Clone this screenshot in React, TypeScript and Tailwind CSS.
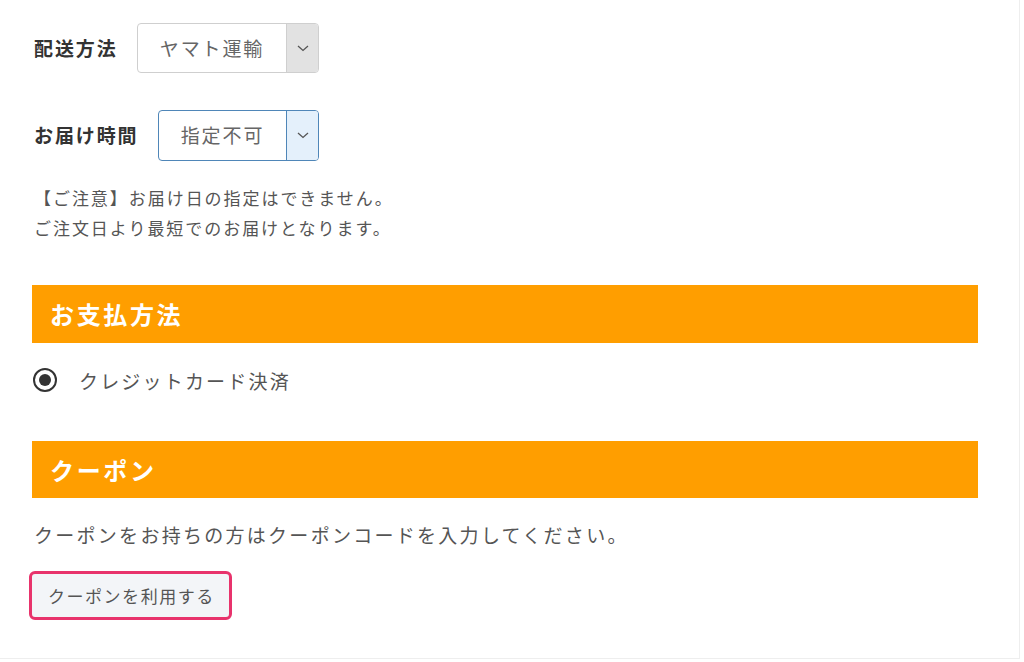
import React from 'react';

const font = { fontFamily: '"Noto Sans CJK JP", "Noto Sans", sans-serif' };

const Chevron = () => (
  <svg width="12" height="7" viewBox="0 0 12 7" fill="none">
    <path d="M1 1l5 4.5L11 1" stroke="#555" strokeWidth="1.3" />
  </svg>
);

const SelectBox = ({ value, active }: { value: string; active?: boolean }) => (
  <div
    className={
      'flex h-full rounded-[4px] border bg-white ' +
      (active ? 'border-[#4f86b8] w-[161px]' : 'border-[#cfcfcf] w-[182px]')
    }
  >
    <div className="flex flex-1 items-center justify-center text-[19px] tracking-[0.1em] text-[#666]">
      {value}
    </div>
    <div
      className={
        'flex w-[32px] items-center justify-center rounded-r-[3px] border-l ' +
        (active ? 'border-[#4f86b8] bg-[#e4f0fb]' : 'border-[#cfcfcf] bg-[#e2e2e2]')
      }
    >
      <Chevron />
    </div>
  </div>
);

const Heading = ({ children }: { children: React.ReactNode }) => (
  <div className="flex w-[946px] items-center bg-[#ff9e00] pl-[18px] text-[24px] font-bold tracking-[0.11em] text-white">
    {children}
  </div>
);

export default function App() {
  return (
    <div style={font} className="h-[659px] w-[1020px] border-r border-b border-[#eeeeee] bg-white pl-[32px] pt-[23px]">
      <div className="ml-[2px] flex h-[50px] items-center">
        <div className="w-[103px] text-[19px] font-bold tracking-[0.1em] text-[#333]">配送方法</div>
        <SelectBox value="ヤマト運輸" />
      </div>

      <div className="ml-[2px] mt-[37px] flex h-[51px] items-center">
        <div className="w-[124px] text-[19px] font-bold tracking-[0.1em] text-[#333]">お届け時間</div>
        <SelectBox value="指定不可" active />
      </div>

      <div className="ml-[2px] mt-[22px] text-[17px] leading-[30px] tracking-[0.115em] text-[#555]">
        <p>【ご注意】お届け日の指定はできません。</p>
        <p>ご注文日より最短でのお届けとなります。</p>
      </div>

      <div className="mt-[42px] flex h-[58px]">
        <Heading>お支払方法</Heading>
      </div>

      <div className="ml-[1px] mt-[25px] flex h-[24px] items-center">
        <div className="flex h-[24px] w-[24px] items-center justify-center rounded-full border-2 border-[#333]">
          <div className="h-[12px] w-[12px] rounded-full bg-[#333]" />
        </div>
        <span className="ml-[22px] mt-[3px] text-[19px] tracking-[0.115em] text-[#555]">クレジットカード決済</span>
      </div>

      <div className="mt-[49px] flex h-[57px]">
        <Heading>クーポン</Heading>
      </div>

      <p className="ml-[2px] mt-[22px] text-[19px] leading-[30px] tracking-[0.12em] text-[#555]">
        クーポンをお持ちの方はクーポンコードを入力してください。
      </p>

      <div className="-ml-[3px] mt-[21px] flex h-[49px] w-[203px] items-center rounded-[6px] border-[3px] border-[#e8336c] bg-[#f3f5f8] pl-[16px] text-[17px] tracking-[0.09em] text-[#555]">
        クーポンを利用する
      </div>
    </div>
  );
}
